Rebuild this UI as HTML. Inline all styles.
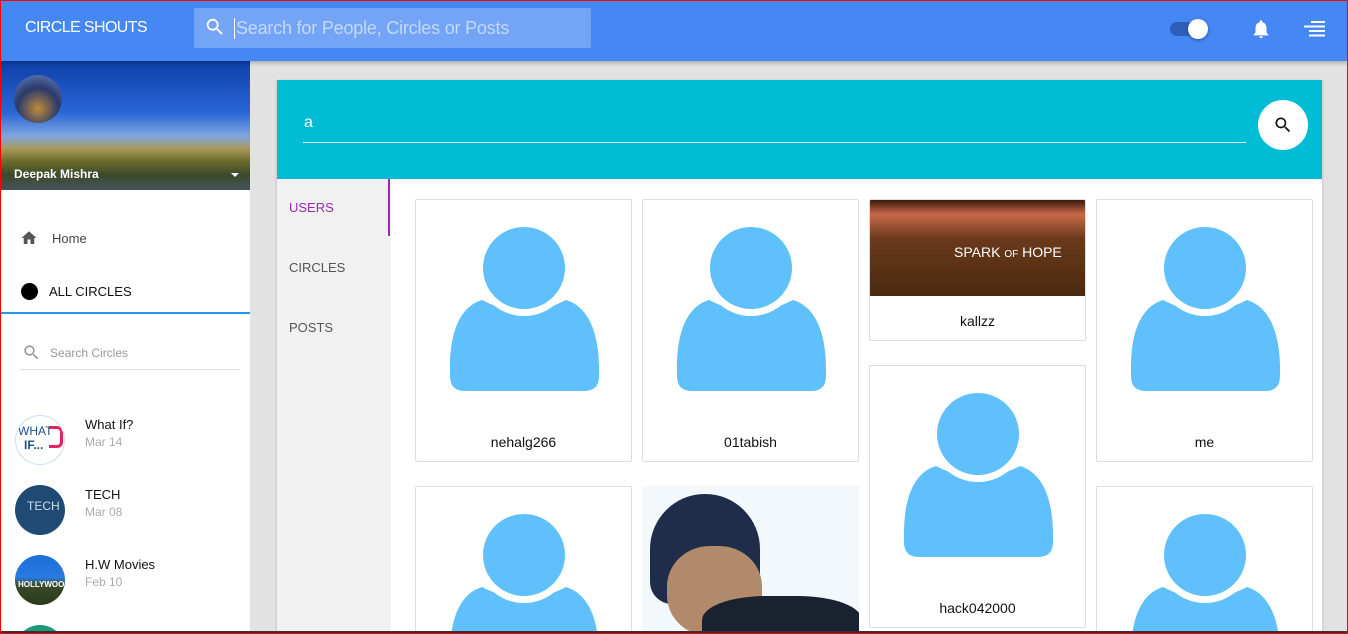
<!DOCTYPE html>
<html><head><meta charset="utf-8"><style>
*{box-sizing:border-box;margin:0;padding:0}
html,body{width:1348px;height:634px;overflow:hidden}
body{font-family:"Liberation Sans",Arial,sans-serif;background:#e2e2e2}
#w{position:relative;width:1348px;height:634px;overflow:hidden}
.frame{position:absolute;inset:0;border:1px solid #f00;z-index:50;pointer-events:none}
.top{position:absolute;left:0;top:0;width:1348px;height:61px;background:#4587f3;box-shadow:0 2px 4px rgba(0,0,0,.25);z-index:5}
.logo{position:absolute;left:25px;top:19px;color:#fff;font-size:16px;letter-spacing:-0.6px}
.search{position:absolute;left:194px;top:8px;width:397px;height:40px;background:#74a4f6;border-radius:2px}
.search span{position:absolute;left:40px;top:10px;color:#c4d8fb;font-size:18px;border-left:1px solid #fff;padding-left:1px;letter-spacing:-0.2px}
.side{position:absolute;left:0;top:61px;width:250px;height:573px;background:#fff;overflow:hidden}
.banner{position:absolute;left:0;top:0;width:250px;height:129px;background:linear-gradient(180deg,#0d3fa8 0%,#2a66d6 40%,#7fa6e0 58%,#a89a5a 68%,#6a6a2a 78%,#3c4a2a 88%,#44525a 100%)}
.main{position:absolute;left:277px;top:80px;width:1045px;height:554px;background:#fff;box-shadow:0 1px 3px rgba(0,0,0,.2)}
.cyan{position:absolute;left:0;top:0;width:1045px;height:99px;background:#00bcd4}
.tabs{position:absolute;left:0;top:99px;width:114px;height:455px;background:#f1f1f1}
.tab{position:absolute;left:12px;font-size:13px;color:#555}
.card{position:absolute;width:217px;background:#fff;border:1px solid #ddd;border-radius:2px;overflow:hidden}
.card .n{position:absolute;left:0;width:100%;text-align:center;font-size:14px;color:#111}
.item{position:absolute;left:15px}
.item .c{position:absolute;left:0;top:0;width:50px;height:50px;border-radius:50%;overflow:hidden}
.item .t{position:absolute;left:70px;top:2px;font-size:13px;color:#111;white-space:nowrap}
.item .d{position:absolute;left:70px;top:20px;font-size:12px;color:#aaa;white-space:nowrap}
</style></head><body><div id="w">
<div class="frame"></div>
<div class="top">
<div class="logo">CIRCLE SHOUTS</div>
<div class="search"><svg style="position:absolute;left:10px;top:8px" width="22" height="22" viewBox="0 0 24 24"><path fill="#fff" d="M15.5 14h-.8l-.3-.3A6.5 6.5 0 1 0 9.5 16a6.5 6.5 0 0 0 4.2-1.6l.3.3v.8l5 5 1.5-1.5-5-5zm-6 0a4.5 4.5 0 1 1 0-9 4.5 4.5 0 0 1 0 9z"/></svg><span>Search for People, Circles or Posts</span></div>
<div style="position:absolute;left:1170px;top:22px;width:34px;height:14px;border-radius:7px;background:#2d5fb8"></div>
<div style="position:absolute;left:1188px;top:19px;width:20px;height:20px;border-radius:50%;background:#fff;box-shadow:0 1px 3px rgba(0,0,0,.4)"></div>
<svg style="position:absolute;left:1250px;top:18px" width="22" height="22" viewBox="0 0 24 24"><path fill="#fff" d="M12 22c1.1 0 2-.9 2-2h-4c0 1.1.9 2 2 2zm6-6v-5c0-3.1-1.6-5.6-4.5-6.3V4c0-.8-.7-1.5-1.5-1.5s-1.5.7-1.5 1.5v.7C7.6 5.4 6 7.9 6 11v5l-2 2v1h16v-1l-2-2z"/></svg>
<svg style="position:absolute;left:1304px;top:21px" width="21" height="16" viewBox="0 0 21 16"><rect x="7" y="0" width="14" height="2" fill="#fff"/><rect x="0" y="4.5" width="21" height="2" fill="#fff"/><rect x="5" y="9" width="16" height="2" fill="#fff"/><rect x="5" y="13.5" width="16" height="2" fill="#fff"/></svg>
</div>
<div class="side">
<div class="banner"><div style="position:absolute;left:14px;top:14px;width:48px;height:48px;border-radius:50%;background:radial-gradient(circle at 50% 70%,#c08a3a,#2a3a6a 50%,#6a8ac8)"></div>
<div style="position:absolute;left:14px;top:106px;color:#fff;font-weight:bold;font-size:12px">Deepak Mishra</div>
<div style="position:absolute;left:231px;top:112px;border:4px solid transparent;border-top-color:#fff"></div></div>
<svg style="position:absolute;left:20px;top:168px" width="18" height="18" viewBox="0 0 24 24"><path fill="#555" d="M10 20v-6h4v6h5v-8h3L12 3 2 12h3v8z"/></svg>
<div style="position:absolute;left:52px;top:170px;font-size:13px;color:#444">Home</div>
<div style="position:absolute;left:21px;top:222px;width:17px;height:17px;border-radius:50%;background:#000"></div>
<div style="position:absolute;left:49px;top:223px;font-size:13px;color:#111">ALL CIRCLES</div>
<div style="position:absolute;left:0;top:251px;width:250px;height:2px;background:#2196f3"></div>
<svg style="position:absolute;left:22px;top:282px" width="19" height="19" viewBox="0 0 24 24"><path fill="#999" d="M15.5 14h-.8l-.3-.3A6.5 6.5 0 1 0 9.5 16a6.5 6.5 0 0 0 4.2-1.6l.3.3v.8l5 5 1.5-1.5-5-5zm-6 0a4.5 4.5 0 1 1 0-9 4.5 4.5 0 0 1 0 9z"/></svg>
<div style="position:absolute;left:50px;top:285px;font-size:12px;color:#999">Search Circles</div>
<div style="position:absolute;left:20px;top:308px;width:220px;height:1px;background:#ddd"></div>
<div class="item" style="top:354px"><div class="c" style="background:#fff;border:1px solid #cde"><div style="position:absolute;left:2px;top:8px;font-size:12px;color:#1b4f8a">WHAT</div><div style="position:absolute;left:8px;top:22px;font-size:12px;font-weight:bold;color:#1b4f8a">IF...</div><div style="position:absolute;left:33px;top:10px;width:14px;height:22px;border:3px solid #e0245e;border-left:none;border-radius:0 6px 6px 0"></div></div><div class="t">What If?</div><div class="d">Mar 14</div></div>
<div class="item" style="top:424px"><div class="c" style="background:#1f4a73"><div style="position:absolute;left:12px;top:14px;font-size:12px;color:#cde">TECH</div></div><div class="t">TECH</div><div class="d">Mar 08</div></div>
<div class="item" style="top:494px"><div class="c" style="background:linear-gradient(#1a6fd6 0%,#2a7ae0 45%,#3a4a2a 60%,#2a3a1a)"><div style="position:absolute;left:3px;top:25px;font-size:8px;color:#fff;font-weight:bold">HOLLYWOOD</div></div><div class="t">H.W Movies</div><div class="d">Feb 10</div></div>
<div class="item" style="top:564px"><div class="c" style="background:#1a9a7a"></div></div>
</div>
<div class="main">
<div class="cyan">
<div style="position:absolute;left:27px;top:34px;color:#fff;font-size:16px">a</div>
<div style="position:absolute;left:26px;top:62px;width:943px;height:1px;background:#e0f0f2"></div>
<div style="position:absolute;left:981px;top:20px;width:50px;height:50px;border-radius:50%;background:#fff"></div>
<svg style="position:absolute;left:996px;top:35px" width="20" height="20" viewBox="0 0 24 24"><path fill="#111" d="M15.5 14h-.8l-.3-.3A6.5 6.5 0 1 0 9.5 16a6.5 6.5 0 0 0 4.2-1.6l.3.3v.8l5 5 1.5-1.5-5-5zm-6 0a4.5 4.5 0 1 1 0-9 4.5 4.5 0 0 1 0 9z"/></svg>
</div>
<div class="tabs">
<div class="tab" style="top:21px;color:#9c27b0">USERS</div>
<div style="position:absolute;left:111px;top:0;width:2px;height:57px;background:#9c27b0"></div>
<div class="tab" style="top:81px">CIRCLES</div>
<div class="tab" style="top:141px">POSTS</div>
</div>
</div>
<svg width="0" height="0" style="position:absolute"><defs><g id="av"><path fill="#5fc0fc" d="M34 176 C33 140 40 108 66 100 Q108 122 150 100 C176 108 184 140 183 176 Q183 191 168 191 L49 191 Q34 191 34 176 Z"/><circle cx="108" cy="68" r="48" fill="#fff"/><circle cx="108" cy="68" r="41" fill="#5fc0fc"/></g></defs></svg>
<div class="card" style="left:415px;top:199px;height:263px"><svg width="217" height="263"><use href="#av"/></svg><div class="n" style="top:234px">nehalg266</div></div>
<div class="card" style="left:642px;top:199px;height:263px"><svg width="217" height="263"><use href="#av"/></svg><div class="n" style="top:234px">01tabish</div></div>
<div class="card" style="left:869px;top:199px;height:142px"><div style="height:96px;background:linear-gradient(180deg,#3a1a0a 0%,#c86a4a 15%,#6a3a1a 40%,#4a2a10 100%);position:relative"><div style="position:absolute;left:84px;top:44px;color:#fff;font-size:14px">SPARK <span style="font-size:10px">OF</span> HOPE</div></div><div class="n" style="top:113px">kallzz</div></div>
<div class="card" style="left:869px;top:365px;height:263px"><svg width="217" height="263"><use href="#av"/></svg><div class="n" style="top:234px">hack042000</div></div>
<div class="card" style="left:1096px;top:199px;height:263px"><svg width="217" height="263"><use href="#av"/></svg><div class="n" style="top:234px">me</div></div>
<div class="card" style="left:415px;top:486px;height:148px"><svg width="217" height="263"><use href="#av"/></svg></div>
<div class="card" style="left:642px;top:486px;height:148px;border:none;background:#f2f8fc"><div style="position:absolute;left:8px;top:8px;width:110px;height:110px;border-radius:50% 50% 20% 20%;background:#1f2d4a"></div><div style="position:absolute;left:25px;top:60px;width:95px;height:90px;border-radius:45%;background:#b08a6a"></div><div style="position:absolute;left:60px;top:110px;width:160px;height:60px;border-radius:40%;background:#1a2230"></div></div>
<div class="card" style="left:1096px;top:486px;height:148px"><svg width="217" height="263"><use href="#av"/></svg></div>
<div style="position:absolute;left:0;top:631px;width:1348px;height:3px;background:#333;z-index:40"></div>
</div></body></html>
